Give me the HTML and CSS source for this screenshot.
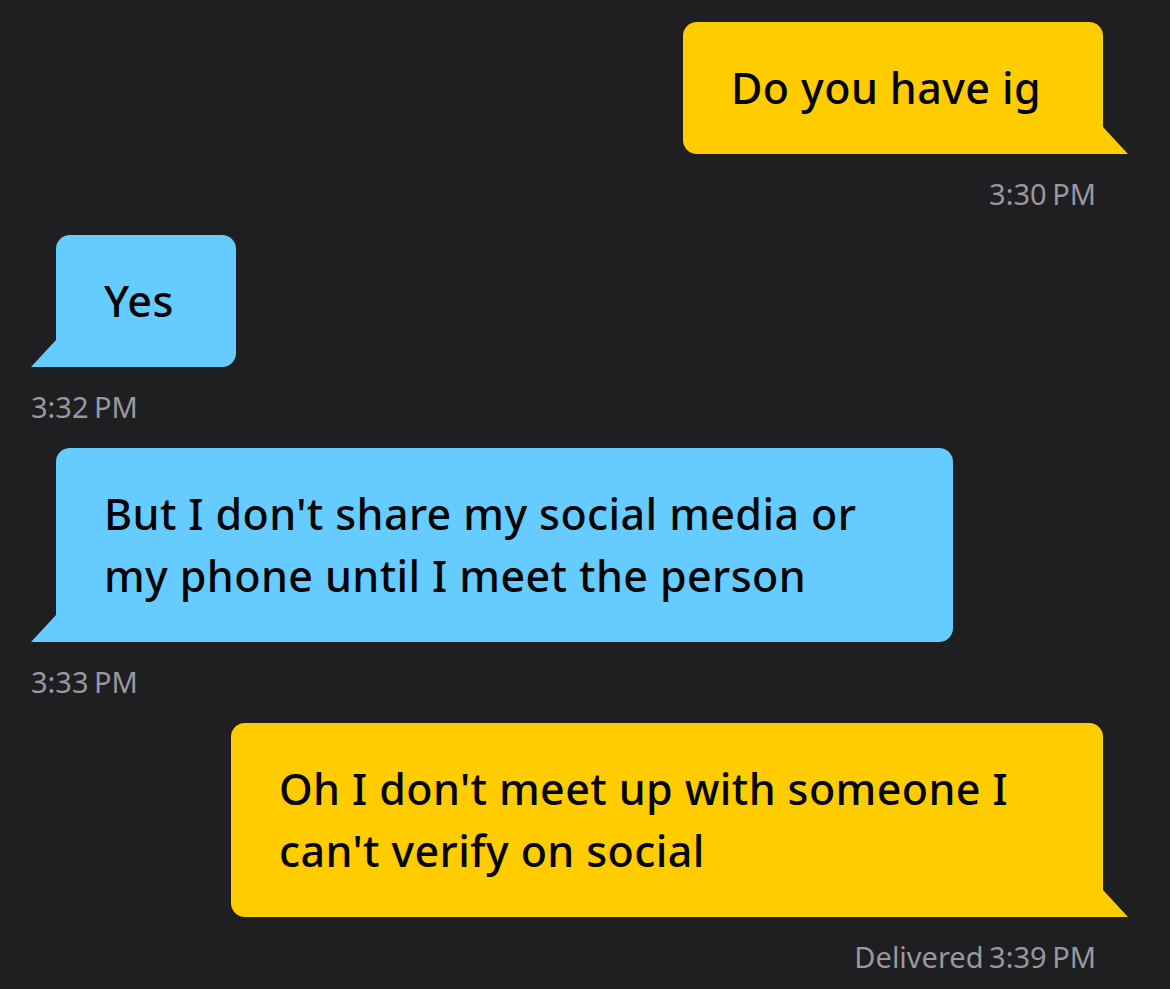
FILE: index.html
```html
<!DOCTYPE html>
<html lang="en">
<head>
    <meta charset="UTF-8">
    <meta name="viewport" content="width=device-width, initial-scale=1.0">
    <title>Chat</title>
    <link rel="stylesheet" href="styles.css">
</head>
<body>
    <div class="chat">
        <div class="msg sent">
            <div class="bubble">Do you have ig</div>
            <div class="meta">3:30 PM</div>
        </div>
        <div class="msg received">
            <div class="bubble">Yes</div>
            <div class="meta">3:32 PM</div>
        </div>
        <div class="msg received">
            <div class="bubble wide">But I don't share my social media or my phone until I meet the person</div>
            <div class="meta">3:33 PM</div>
        </div>
        <div class="msg sent">
            <div class="bubble wide">Oh I don't meet up with someone I can't verify on social</div>
            <div class="meta">Delivered 3:39 PM</div>
        </div>
    </div>
</body>
</html>
```

FILE: styles.css
```css
html, body {
    margin: 0;
    background-color: #1f1f21;
}

.chat {
    display: flex;
    flex-direction: column;
    padding: 22px 42px 0 31px;
    font-family: "Noto Sans", "Open Sans", sans-serif;
}

.msg {
    display: flex;
    flex-direction: column;
    margin-bottom: 23px;
}

.sent {
    align-items: flex-end;
}

.received {
    align-items: flex-start;
}

.bubble {
    position: relative;
    padding: 35px 62px 35px 48px;
    font-size: 43px;
    font-weight: 500;
    letter-spacing: 0.4px;
    line-height: 62px;
    color: #050505;
    border-radius: 14px;
}

.bubble::after {
    content: "";
    position: absolute;
    bottom: 0;
    width: 25px;
    height: 27px;
}

.sent .bubble {
    margin-right: 25px;
    background-color: #ffcc00;
    border-bottom-right-radius: 0;
}

.sent .bubble::after {
    right: -25px;
    background-color: #ffcc00;
    clip-path: polygon(0 0, 100% 100%, 0 100%);
}

.received .bubble {
    margin-left: 25px;
    background-color: #66ccff;
    border-bottom-left-radius: 0;
}

.received .bubble::after {
    left: -25px;
    background-color: #66ccff;
    clip-path: polygon(100% 0, 100% 100%, 0 100%);
}

.received .bubble.wide {
    max-width: 787px;
}

.sent .bubble.wide {
    max-width: 762px;
}

.meta {
    margin-top: 22px;
    font-size: 29px;
    line-height: 36px;
    word-spacing: -2px;
    color: #98989e;
}

.sent .meta {
    margin-right: 32px;
}
```
